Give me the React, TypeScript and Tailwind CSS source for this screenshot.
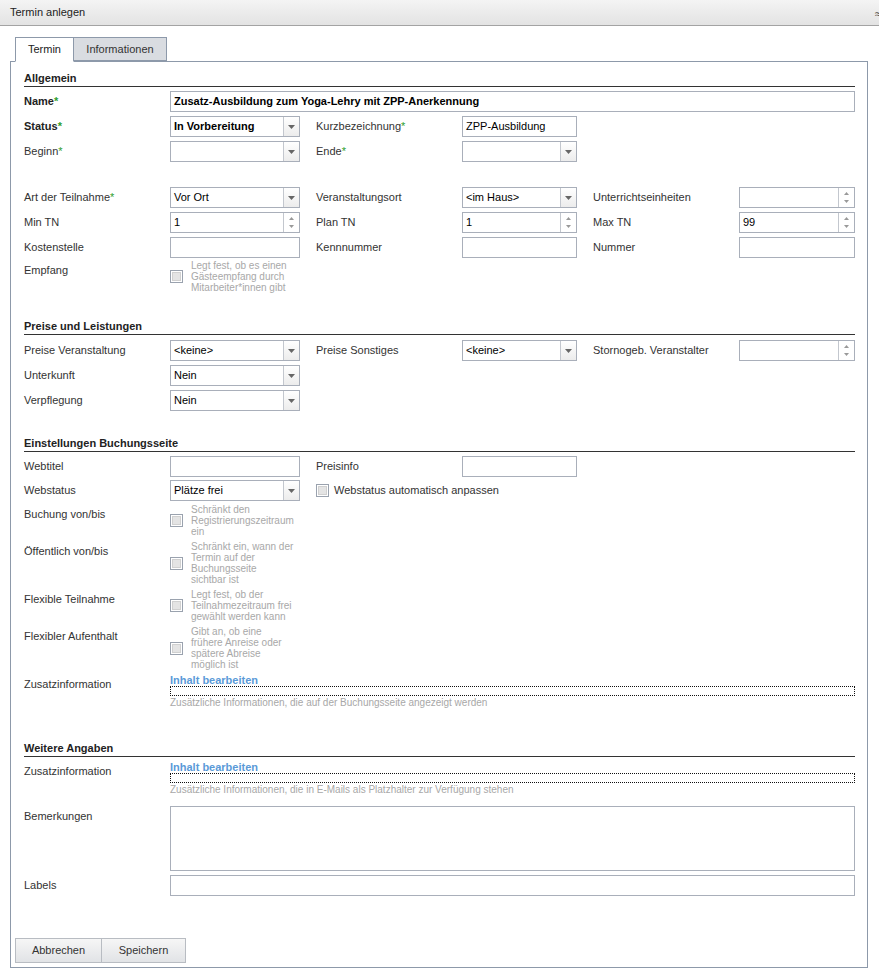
import React from 'react';

const Req = () => <span className="text-[#2e9e2e]">*</span>;

const Label = ({ text, req, bold, w = 'w-[146px]' }: { text: string; req?: boolean; bold?: boolean; w?: string }) => (
  <div className={`${w} shrink-0 leading-[21px] ${bold ? 'font-bold text-[#222]' : ''}`}>
    {text}
    {req && <Req />}
  </div>
);

const TextInput = ({ w, value, bold }: { w: string; value?: string; bold?: boolean }) => (
  <div className={`${w} h-[21px] border border-[#a9afba] bg-white pl-[3px] leading-[19px] text-black ${bold ? 'font-bold' : ''} overflow-hidden whitespace-nowrap`}>
    {value}
  </div>
);

const Select = ({ w, value, bold }: { w: string; value?: string; bold?: boolean }) => (
  <div className={`${w} h-[21px] border border-[#a9afba] bg-white flex`}>
    <div className={`flex-1 pl-[3px] leading-[19px] text-black ${bold ? 'font-bold' : ''}`}>{value}</div>
    <div className="w-[16px] border-l border-[#c3c7ce] bg-gradient-to-b from-[#ffffff] to-[#ececec] flex items-center justify-center">
      <svg width="7" height="4" viewBox="0 0 7 4">
        <path d="M0 0h7L3.5 4z" fill="#666" />
      </svg>
    </div>
  </div>
);

const Spinner = ({ w, value }: { w: string; value?: string }) => (
  <div className={`${w} h-[21px] border border-[#a9afba] bg-white flex`}>
    <div className="flex-1 pl-[3px] leading-[19px] text-black">{value}</div>
    <div className="w-[16px] border-l border-[#c3c7ce] flex flex-col items-center justify-center gap-[5px]">
      <svg width="5" height="3" viewBox="0 0 5 3">
        <path d="M0 3h5L2.5 0z" fill="#999" />
      </svg>
      <svg width="5" height="3" viewBox="0 0 5 3">
        <path d="M0 0h5L2.5 3z" fill="#999" />
      </svg>
    </div>
  </div>
);

const Box = () => (
  <div className="w-[13px] h-[13px] shrink-0 border border-[#9aa2ae] bg-white p-[1px]">
    <div className="w-full h-full bg-[#e4e4e4] border border-[#d0d0d0]" />
  </div>
);

const CheckHint = ({ label, lines }: { label: string; lines: string[] }) => (
  <div className="flex mb-[4px]">
    <Label text={label} />
    <div className="flex items-center">
      <Box />
      <div className="ml-[8px] w-[106px] text-[10px] leading-[11px] text-[#a8a8a8]">
        {lines.map((l, i) => (
          <div key={i}>{l}</div>
        ))}
      </div>
    </div>
  </div>
);

const Heading = ({ text, mt }: { text: string; mt: string }) => (
  <div className={`${mt} font-bold text-[#222] leading-[13px] pb-[1px] border-b border-[#333]`}>{text}</div>
);

// one form row: label | field | label | field | label | field
const Row = ({ children }: { children: React.ReactNode }) => <div className="flex h-[21px] mb-[4px]">{children}</div>;

const C1 = ({ children }: { children?: React.ReactNode }) => <div className="w-[146px] shrink-0">{children}</div>;
const C2 = ({ children }: { children?: React.ReactNode }) => <div className="w-[131px] shrink-0">{children}</div>;

const Zusatz = ({ hint }: { hint: string }) => (
  <div className="flex">
    <Label text="Zusatzinformation" />
    <div className="flex-1">
      <div className="leading-[12px] font-bold text-[#5a9ad8]">Inhalt bearbeiten</div>
      <div className="h-[10px] border border-dotted border-[#111]" />
      <div className="mt-[1px] text-[10px] leading-[12px] text-[#a8a8a8]">{hint}</div>
    </div>
  </div>
);

export default function App() {
  return (
    <div className="w-[879px] h-[978px] bg-white overflow-hidden relative font-['Liberation_Sans',Arial,sans-serif] text-[11px] text-[#333]">
      {/* Title bar */}
      <div className="h-[26px] border-b border-[#a3a3a3] bg-gradient-to-b from-[#f4f4f4] to-[#e3e3e3] flex items-center pl-[10px] relative">
        <span className="text-[#222]">Termin anlegen</span>
        <span className="absolute left-[875px] top-[5px] text-[12px] text-[#444]">≈</span>
      </div>

      {/* Tabs */}
      <div className="flex ml-[15px] mt-[11px] h-[25px] relative z-10">
        <div className="w-[59px] h-[25px] border border-[#8d99aa] border-b-white bg-white flex items-center justify-center text-[#222]">
          Termin
        </div>
        <div className="w-[93px] h-[24px] border border-l-0 border-[#8d99aa] bg-[#d9dce1] flex items-center justify-center text-[#333]">
          Informationen
        </div>
      </div>

      {/* Panel */}
      <div className="ml-[10px] -mt-[1px] w-[858px] h-[907px] border border-[#8d99aa] flex flex-col">
        <div className="pl-[13px] pr-[12px] pt-[10px]">
          <Heading text="Allgemein" mt="mt-0" />
          <div className="mt-[4px]">
            <Row>
              <Label text="Name" req bold />
              <TextInput w="flex-1" value="Zusatz-Ausbildung zum Yoga-Lehry mit ZPP-Anerkennung" bold />
            </Row>
            <Row>
              <Label text="Status" req bold />
              <C1><Select w="w-[130px]" value="In Vorbereitung" bold /></C1>
              <Label text="Kurzbezeichnung" req />
              <C2><TextInput w="w-[115px]" value="ZPP-Ausbildung" /></C2>
            </Row>
            <Row>
              <Label text="Beginn" req />
              <C1><Select w="w-[130px]" /></C1>
              <Label text="Ende" req />
              <C2><Select w="w-[115px]" /></C2>
            </Row>
            <div className="h-[21px]" />
            <Row>
              <Label text="Art der Teilnahme" req />
              <C1><Select w="w-[130px]" value="Vor Ort" /></C1>
              <Label text="Veranstaltungsort" />
              <C2><Select w="w-[115px]" value="<im Haus>" /></C2>
              <Label text="Unterrichtseinheiten" />
              <Spinner w="w-[116px]" />
            </Row>
            <Row>
              <Label text="Min TN" />
              <C1><Spinner w="w-[130px]" value="1" /></C1>
              <Label text="Plan TN" />
              <C2><Spinner w="w-[115px]" value="1" /></C2>
              <Label text="Max TN" />
              <Spinner w="w-[116px]" value="99" />
            </Row>
            <Row>
              <Label text="Kostenstelle" />
              <C1><TextInput w="w-[130px]" /></C1>
              <Label text="Kennnummer" />
              <C2><TextInput w="w-[115px]" /></C2>
              <Label text="Nummer" />
              <TextInput w="w-[116px]" />
            </Row>
            <div className="-mt-[2px]">
              <CheckHint label="Empfang" lines={['Legt fest, ob es einen', 'Gästeempfang durch', 'Mitarbeiter*innen gibt']} />
            </div>
          </div>

          <Heading text="Preise und Leistungen" mt="mt-[27px]" />
          <div className="mt-[5px]">
            <Row>
              <Label text="Preise Veranstaltung" />
              <C1><Select w="w-[130px]" value="<keine>" /></C1>
              <Label text="Preise Sonstiges" />
              <C2><Select w="w-[115px]" value="<keine>" /></C2>
              <Label text="Stornogeb. Veranstalter" />
              <Spinner w="w-[116px]" />
            </Row>
            <Row>
              <Label text="Unterkunft" />
              <C1><Select w="w-[130px]" value="Nein" /></C1>
            </Row>
            <Row>
              <Label text="Verpflegung" />
              <C1><Select w="w-[130px]" value="Nein" /></C1>
            </Row>
          </div>

          <Heading text="Einstellungen Buchungsseite" mt="mt-[26px]" />
          <div className="mt-[4px]">
            <Row>
              <Label text="Webtitel" />
              <C1><TextInput w="w-[130px]" /></C1>
              <Label text="Preisinfo" />
              <C2><TextInput w="w-[115px]" /></C2>
            </Row>
            <div className="flex h-[21px] mb-[3px] -mt-[1px]">
              <Label text="Webstatus" />
              <C1><Select w="w-[130px]" value="Plätze frei" /></C1>
              <div className="flex items-center gap-[5px]">
                <Box />
                <span className="text-[#333]">Webstatus automatisch anpassen</span>
              </div>
            </div>
            <CheckHint label="Buchung von/bis" lines={['Schränkt den', 'Registrierungszeitraum', 'ein']} />
            <CheckHint
              label="Öffentlich von/bis"
              lines={['Schränkt ein, wann der', 'Termin auf der', 'Buchungsseite', 'sichtbar ist']}
            />
            <CheckHint label="Flexible Teilnahme" lines={['Legt fest, ob der', 'Teilnahmezeitraum frei', 'gewählt werden kann']} />
            <CheckHint
              label="Flexibler Aufenthalt"
              lines={['Gibt an, ob eine', 'frühere Anreise oder', 'spätere Abreise', 'möglich ist']}
            />
            <Zusatz hint="Zusätzliche Informationen, die auf der Buchungsseite angezeigt werden" />
          </div>

          <Heading text="Weitere Angaben" mt="mt-[33px]" />
          <div className="mt-[4px]">
            <Zusatz hint="Zusätzliche Informationen, die in E-Mails als Platzhalter zur Verfügung stehen" />
            <div className="flex mt-[10px]">
              <Label text="Bemerkungen" />
              <div className="flex-1 h-[65px] border border-[#a9afba] bg-white" />
            </div>
            <div className="flex mt-[4px]">
              <Label text="Labels" />
              <TextInput w="flex-1" />
            </div>
          </div>
        </div>

        {/* Buttons */}
        <div className="mt-auto pl-[4px] pb-[4px] flex">
          <button className="w-[87px] h-[25px] border border-[#b8bcc2] bg-gradient-to-b from-[#f6f6f6] to-[#e1e3e6] text-[#333]">
            Abbrechen
          </button>
          <button className="w-[84px] h-[25px] border border-l-0 border-[#b8bcc2] bg-gradient-to-b from-[#f6f6f6] to-[#e1e3e6] text-[#333]">
            Speichern
          </button>
        </div>
      </div>
    </div>
  );
}
